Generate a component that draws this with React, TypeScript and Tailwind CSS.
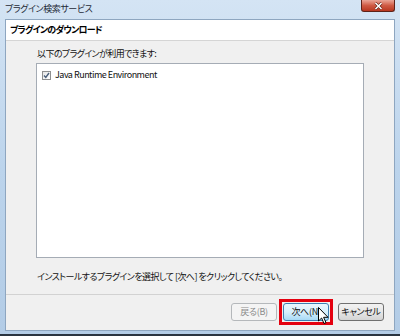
import React from "react";

const jp = "font-['Meiryo_UI','Noto_Sans_CJK_JP',sans-serif] [font-feature-settings:'palt']";

function WinButton({
  children,
  disabled,
  active,
}: {
  children: React.ReactNode;
  disabled?: boolean;
  active?: boolean;
}) {
  let tone =
    "border-[#707070] bg-gradient-to-b from-[#f2f2f2] via-[#e6e6e6] to-[#d4d4d4] text-[#111]";
  if (disabled) tone = "border-[#b5b8bb] bg-[#f4f4f4] text-[#8a8a8a]";
  if (active)
    tone =
      "border-[#3c7fb1] bg-gradient-to-b from-[#eaf6fd] via-[#d7effc] to-[#a7d9f5] text-[#111]";
  return (
    <div
      className={`w-[46px] h-[18px] rounded-[3px] border flex items-center justify-center whitespace-nowrap text-[9px] tracking-[-0.3px] leading-none ${tone}`}
    >
      {children}
    </div>
  );
}

export default function App() {
  return (
    <div
      className={`relative w-[400px] h-[336px] overflow-hidden bg-gradient-to-b from-[#d4e4f4] via-[#bcd4ec] to-[#b3cce6] ${jp}`}
    >
      {/* Title bar */}
      <div className="h-[19px] flex items-start justify-between pl-[5px] pr-[5px]">
        <span className="text-[9px] leading-[18px] text-[#1e2a36] tracking-[-0.4px]">
          プラグイン検索サービス
        </span>
        <div className="w-[34px] h-[12px] rounded-b-[3px] border border-t-0 border-[#5e2218] bg-gradient-to-b from-[#e9a597] via-[#cf5a44] to-[#b8361f] flex items-center justify-center">
          <svg width="9" height="8" viewBox="0 0 9 8">
            <path d="M1.5 1 L7.5 7 M7.5 1 L1.5 7" stroke="#5a1a10" strokeWidth="2.6" />
            <path d="M1.5 1 L7.5 7 M7.5 1 L1.5 7" stroke="#fff" strokeWidth="1.6" />
          </svg>
        </div>
      </div>

      {/* Client area */}
      <div className="mx-[5px] h-[312px] border border-[#8ea6c0] bg-[#f0f0f0] flex flex-col">
        <div className="h-[21px] bg-white border-b border-[#d5d5d5] flex items-center pl-[4px]">
          <span className="text-[9px] font-bold text-black tracking-[-0.8px]">
            プラグインのダウンロード
          </span>
        </div>

        <div className="flex-1 flex flex-col pl-[30px] pr-[30px] pt-[6px]">
          <div className="text-[9px] leading-[14px] pl-[1px] text-[#111] tracking-[-0.6px]">
            以下のプラグインが利用できます:
          </div>
          <div className="mt-[2px] h-[195px] border border-[#a5acb5] bg-white pl-[5px] pt-[5px]">
            <div className="flex items-center gap-[4px]">
              <div className="w-[9px] h-[9px] border border-[#8e8f8f] bg-gradient-to-br from-[#e6e6e6] to-white flex items-center justify-center">
                <svg width="7" height="7" viewBox="0 0 7 7">
                  <path d="M1 3.5 L2.8 5.5 L6 1" stroke="#4a5f7a" strokeWidth="1.4" fill="none" />
                </svg>
              </div>
              <span className="text-[9px] leading-[12px] text-[#111] tracking-[-0.5px]">
                Java Runtime Environment
              </span>
            </div>
          </div>
          <div className="mt-[12px] text-[9px] leading-[14px] pl-[1px] text-[#111] tracking-[-0.55px]">
            インストールするプラグインを選択して [次へ] をクリックしてください。
          </div>
        </div>

        <div className="h-[36px] border-t border-[#d2d2d2] flex items-center justify-end pr-[10px] pb-[2px]">
          <WinButton disabled>戻る(B)</WinButton>
          <div className="ml-[2px] mr-[5px] border-[3px] border-[#e4000f] p-[1px]">
            <WinButton active>次へ(N)</WinButton>
          </div>
          <WinButton>キャンセル</WinButton>
        </div>
      </div>

      <div className="absolute bottom-0 left-0 right-0 h-[2px] bg-[#2a3440]" />

      {/* Mouse pointer */}
      <svg
        className="absolute left-[318px] top-[307px]"
        width="12"
        height="18"
        viewBox="0 0 12 18"
      >
        <path
          d="M0.5 0.5 L0.5 14 L3.6 11 L6 16.5 L8 15.6 L5.6 10.3 L10 10.3 Z"
          fill="#fff"
          stroke="#000"
          strokeWidth="1"
        />
      </svg>
    </div>
  );
}
